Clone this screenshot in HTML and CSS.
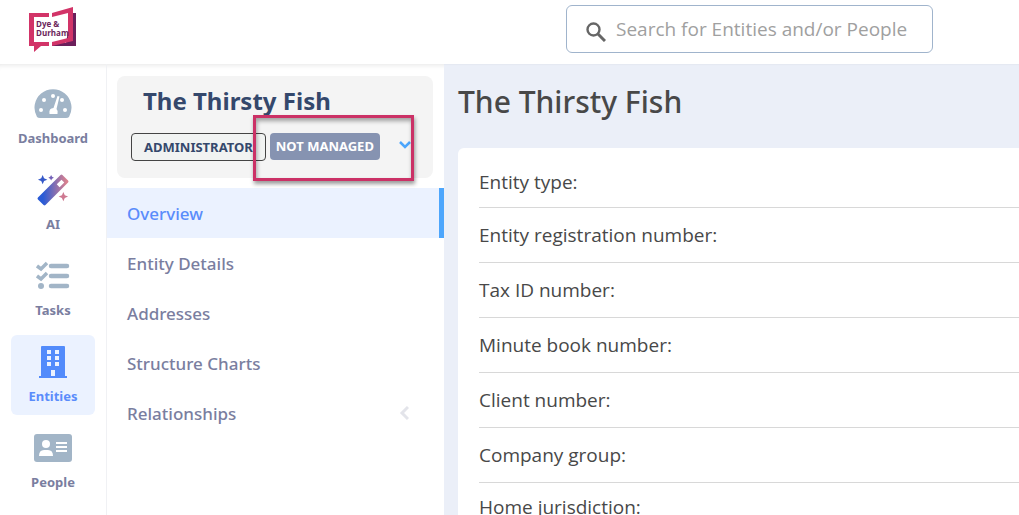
FILE: index.html
```
<!DOCTYPE html>
<html lang="en">
<head>
    <meta charset="UTF-8">
    <title>The Thirsty Fish</title>
    <meta name="viewport" content="width=device-width, initial-scale=1">
    <link rel="stylesheet" href="styles.css">
</head>
<body>
    <header class="topbar">
        <a class="logo" href="#">
            <svg viewBox="0 0 48 46" width="48" height="46" role="img" aria-label="Dye &amp; Durham">
                <path fill="#6b1f5b" d="M42 7h5v33H23v-3h14z"/>
                <path fill="#d23468" d="M0 7h20v4H5v25h15v4h-8l-7 6v-6H0z"/>
                <path fill="#d23468" d="M23 7l21-6v34l-21 5v-4l16-4V7l-16 4z"/>
                <text class="logo-text" x="7" y="21">Dye &amp;</text>
                <text class="logo-text" x="7" y="30">Durham</text>
            </svg>
        </a>
        <label class="search">
            <svg viewBox="0 0 20 20" width="20" height="20" aria-hidden="true">
                <circle cx="7.500" cy="7.500" r="6" fill="none" stroke="#666" stroke-width="2.400"/>
                <path d="M12 12l7 7" stroke="#666" stroke-width="3"/>
            </svg>
            <input type="search" placeholder="Search for Entities and/or People" aria-label="Search">
        </label>
    </header>

    <div class="layout">
        <nav class="rail">
            <a class="rail-item" href="#">
                <svg viewBox="0 0 38 30" width="38" aria-hidden="true">
                    <path fill="#a2b5c7" d="M3 28A18.500 18.500 0 1 1 35 28q-1 1-3 1H6q-2 0-3-1z"/>
                    <g fill="#fff">
                        <circle cx="19" cy="7" r="2"/><circle cx="10" cy="11" r="2"/><circle cx="28" cy="11" r="2"/>
                        <circle cx="7" cy="21" r="2"/><circle cx="31" cy="21" r="2"/>
                        <path d="M23.500 7l2 .6-3 12.400q2 2 1 5h-8q-1-6 4-6z"/>
                    </g>
                </svg>
                <span>Dashboard</span>
            </a>
            <a class="rail-item" href="#">
                <svg viewBox="0 0 34 34" width="34" aria-hidden="true">
                    <defs>
                        <linearGradient id="wand" gradientUnits="userSpaceOnUse" x1="2" y1="0" x2="31" y2="0">
                            <stop offset="0.150" stop-color="#295bd6"/>
                            <stop offset="1" stop-color="#d8808f"/>
                        </linearGradient>
                    </defs>
                    <path fill="url(#wand)" fill-rule="evenodd" d="M25 1q1-1 2 0l6 6q1 1 0 2L9 33q-1 1-2 0l-6-6q-1-1 0-2zM26 6l-5 5 3 3 5-5z"/>
                    <path fill="#3559c9" d="M6 1l1.500 3.500L11 6 7.500 7.500 6 11 4.500 7.500 1 6l3.500-1.500z"/>
                    <path fill="#7361b8" d="M15 1l1 2 2 1-2 1-1 2-1-2-2-1 2-1z"/>
                    <path fill="#ce7991" d="M28 19l1.500 3.500L33 24l-3.500 1.500L28 29l-1.500-3.500L23 24l3.500-1.500z"/>
                </svg>
                <span>AI</span>
            </a>
            <a class="rail-item" href="#">
                <svg viewBox="0 0 34 30" width="34" aria-hidden="true">
                    <g fill="none" stroke="#a2b5c7">
                        <path stroke-width="3.500" d="M1 5l4 3 6-6M1 15l4 3 6-6"/>
                        <path stroke-width="4.500" stroke-linecap="round" stroke-linejoin="round" d="M15 5h16M15 15h16M15 25h16"/>
                    </g>
                    <circle cx="5" cy="25" r="3" fill="#a2b5c7"/>
                </svg>
                <span>Tasks</span>
            </a>
            <a class="rail-item active" href="#">
                <svg viewBox="0 0 28 32" width="28" aria-hidden="true">
                    <path fill="#528bfb" d="M3 0h22q1 0 1 1v29h2v2H0v-2h2V1q0-1 1-1z"/>
                    <path fill="#ebf2ff" d="M8 4h4v4H8zM16 4h4v4h-4zM8 10h4v4H8zM16 10h4v4h-4zM8 16h4v4H8zM16 16h4v4h-4zM12 24h4v6h-4z"/>
                </svg>
                <span>Entities</span>
            </a>
            <a class="rail-item" href="#">
                <svg viewBox="0 0 38 28" width="38" aria-hidden="true">
                    <rect width="38" height="28" x="0" y="0" rx="3" fill="#a2b5c7"/>
                    <g fill="#fff">
                        <circle cx="12" cy="10" r="4"/>
                        <path d="M5 22q0-6 5-6h4q5 0 5 6z"/>
                        <path d="M22 8h11v2H22zM22 12h11v2H22zM22 16h11v2H22z"/>
                    </g>
                </svg>
                <span>People</span>
            </a>
        </nav>

        <aside class="sidebar">
            <div class="entity-card">
                <h2>The Thirsty Fish</h2>
                <div class="badges">
                    <span class="badge badge-outline">ADMINISTRATOR</span>
                    <span class="badge badge-solid">NOT MANAGED</span>
                    <button class="toggle" type="button" aria-label="Show more">
                        <svg viewBox="0 0 12 8" width="12" height="8"><path d="M1 1l5 5 5-5" fill="none" stroke="#4da6fc" stroke-width="2.500"/></svg>
                    </button>
                </div>
                <div class="highlight"></div>
            </div>
            <nav class="menu">
                <a class="active" href="#">Overview</a>
                <a href="#">Entity Details</a>
                <a href="#">Addresses</a>
                <a href="#">Structure Charts</a>
                <a href="#">Relationships
                    <svg viewBox="0 0 10 16" width="10" height="16" aria-hidden="true"><path d="M9 2L3 8l6 6" fill="none" stroke="#e3e4ea" stroke-width="3"/></svg>
                </a>
            </nav>
        </aside>

        <main class="content">
            <h1>The Thirsty Fish</h1>
            <dl class="details">
                <div class="row"><dt>Entity type:</dt><dd></dd></div>
                <div class="row"><dt>Entity registration number:</dt><dd></dd></div>
                <div class="row"><dt>Tax ID number:</dt><dd></dd></div>
                <div class="row"><dt>Minute book number:</dt><dd></dd></div>
                <div class="row"><dt>Client number:</dt><dd></dd></div>
                <div class="row"><dt>Company group:</dt><dd></dd></div>
                <div class="row"><dt>Home jurisdiction:</dt><dd></dd></div>
            </dl>
        </main>
    </div>
</body>
</html>
```
FILE: styles.css
```
* {
    box-sizing: border-box;
}

body {
    margin: 0;
    height: 100vh;
    display: flex;
    flex-direction: column;
    overflow: hidden;
    background: #fff;
    font-family: "Noto Sans", "Open Sans", sans-serif;
    color: #484848;
}

a {
    color: inherit;
    text-decoration: none;
}

svg {
    display: block;
    flex: none;
}

/* top bar */
.topbar {
    flex: none;
    height: 64px;
    padding: 0 86px 6px 29px;
    display: flex;
    align-items: center;
    justify-content: space-between;
}
.logo-text {
    font-family: "Open Sans", sans-serif;
    font-size: 8px;
    font-weight: 700;
    fill: #6b1f5b;
}
.search {
    width: 367px;
    height: 48px;
    padding: 0 8px 0 19px;
    display: flex;
    align-items: center;
    gap: 10px;
    border: 1px solid #a0b4cc;
    border-radius: 6px;
}
.search svg {
    margin-top: 6px;
}
.search input {
    flex: 1;
    min-width: 0;
    padding: 0;
    border: none;
    outline: none;
    background: none;
    font-family: "Open Sans", sans-serif;
    font-size: 19px;
    color: #484848;
}
.search input::placeholder {
    color: #a0a0a0;
}

.layout {
    flex: 1;
    min-height: 0;
    display: flex;
    box-shadow: inset 0 6px 6px -6px rgba(0, 0, 0, 0.14);
}

/* icon rail */
.rail {
    flex: none;
    width: 107px;
    padding: 13px 11px 0 11px;
    display: flex;
    flex-direction: column;
    gap: 6px;
    border-right: 1px solid #f0f1f4;
    font-size: 13px;
    font-weight: 700;
    color: #7a7e9f;
}
.rail-item {
    flex: none;
    height: 80px;
    padding: 11px 0 10px;
    display: flex;
    flex-direction: column;
    align-items: center;
    justify-content: space-between;
    border-radius: 6px;
    line-height: 18px;
}
.rail-item svg {
    height: 32px;
}
.rail-item.active {
    background: #ebf2ff;
    color: #5a8cfb;
}

/* entity sidebar */
.sidebar {
    flex: none;
    width: 337px;
    padding-top: 12px;
}
.entity-card {
    position: relative;
    height: 102px;
    margin: 0 11px 10px 10px;
    padding: 8px 14px;
    border-radius: 8px;
    background: #f4f4f4;
}
.entity-card h2 {
    margin: 0 0 15px 12px;
    font-size: 24px;
    line-height: 34px;
    font-weight: 700;
    color: #34486c;
}
.badges {
    display: flex;
    align-items: flex-start;
    gap: 4px;
}
.badge {
    height: 27px;
    font-size: 13px;
    line-height: 27px;
    font-weight: 700;
    border-radius: 4px;
    white-space: nowrap;
}
.badge-outline {
    height: 28px;
    padding: 0 12px;
    border: 1px solid #444;
    background: #f1f3f2;
    color: #34486c;
}
.badge-solid {
    padding: 0 6px;
    background: #8693b1;
    color: #fff;
}
.toggle {
    margin-left: auto;
    padding: 8px;
    border: none;
    background: none;
    cursor: pointer;
}
.highlight {
    position: absolute;
    top: 39px;
    left: 136px;
    width: 161px;
    height: 66px;
    border: 3px solid #cb3166;
    box-shadow: 1px 3px 4px rgba(0, 0, 0, 0.4), inset 1px 3px 4px rgba(0, 0, 0, 0.35);
    pointer-events: none;
}

.menu a {
    height: 50px;
    padding: 0 35px 0 20px;
    display: flex;
    align-items: center;
    justify-content: space-between;
    font-size: 17px;
    font-weight: 500;
    color: #7a7e9f;
}
.menu a.active {
    background: #ebf2ff;
    border-right: 5px solid #4da6fc;
    color: #5a8cfb;
}

/* main panel */
.content {
    flex: 1;
    min-width: 0;
    padding: 18px 0 0 14px;
    background: #ebeff8;
    box-shadow: inset 0 2px 2px -2px rgba(0, 0, 0, 0.1);
}
.content h1 {
    margin: 0 0 26px 0;
    font-size: 30px;
    line-height: 40px;
    font-weight: 500;
}
.details {
    margin: 0;
    padding: 5px 0 0 21px;
    background: #fff;
    border-top-left-radius: 6px;
    font-family: "Open Sans", sans-serif;
}
.row {
    height: 55px;
    display: flex;
    align-items: center;
    border-bottom: 1px solid #d8d8d8;
    font-size: 19px;
    line-height: 26px;
}
.row:first-child {
    padding-top: 4px;
}
.row:last-child {
    height: 48px;
}
.row dd {
    margin: 0;
}
```
